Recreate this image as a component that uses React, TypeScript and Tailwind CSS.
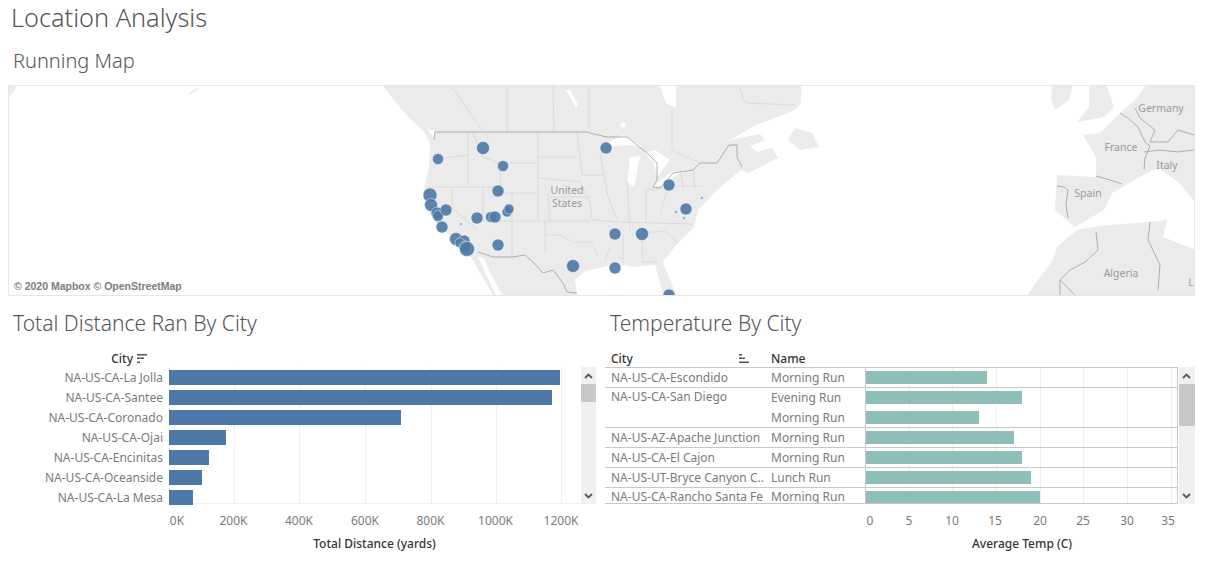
const UI_FONT = "font-['Noto_Sans',sans-serif]";

const distanceRows = [
  { city: "NA-US-CA-La Jolla", width: 391 },
  { city: "NA-US-CA-Santee", width: 383 },
  { city: "NA-US-CA-Coronado", width: 232 },
  { city: "NA-US-CA-Ojai", width: 57 },
  { city: "NA-US-CA-Encinitas", width: 40 },
  { city: "NA-US-CA-Oceanside", width: 33 },
  { city: "NA-US-CA-La Mesa", width: 24 },
];

const distanceTicks = [
  { label: "0K", left: 8 },
  { label: "200K", left: 64.5 },
  { label: "400K", left: 130 },
  { label: "600K", left: 196 },
  { label: "800K", left: 261.5 },
  { label: "1000K", left: 326.5 },
  { label: "1200K", left: 392 },
];

const tempGroups = [
  { city: "NA-US-CA-Escondido", runs: [{ name: "Morning Run", width: 121 }] },
  {
    city: "NA-US-CA-San Diego",
    runs: [
      { name: "Evening Run", width: 156 },
      { name: "Morning Run", width: 113 },
    ],
  },
  { city: "NA-US-AZ-Apache Junction", runs: [{ name: "Morning Run", width: 148 }] },
  { city: "NA-US-CA-El Cajon", runs: [{ name: "Morning Run", width: 156 }] },
  { city: "NA-US-UT-Bryce Canyon C..", runs: [{ name: "Lunch Run", width: 165 }] },
  { city: "NA-US-CA-Rancho Santa Fe", runs: [{ name: "Morning Run", width: 174 }] },
];

const tempTicks = [
  { label: "0", left: 5 },
  { label: "5", left: 44 },
  { label: "10", left: 87 },
  { label: "15", left: 130 },
  { label: "20", left: 175 },
  { label: "25", left: 218 },
  { label: "30", left: 262 },
  { label: "35", left: 303 },
];

const tempGrid = [44, 87, 131, 175, 218, 262, 306];

const dots = [
  [438, 159, 5.5], [483, 148, 6.5], [503, 166, 5.5], [606, 148, 6], [669, 185, 6],
  [686, 209, 6], [430, 195, 7], [431, 205, 6.5], [437, 213, 6], [438, 216, 5.5],
  [446, 210, 6], [442, 227, 6], [456, 239, 6.5], [464, 241, 6], [460, 243, 5],
  [465, 247, 6], [467, 249, 7.5], [477, 218, 6], [491, 217, 5.5], [495, 217, 6],
  [507, 212, 5], [509, 209, 5], [498, 191, 6], [498, 245, 6], [573, 266, 6.5],
  [615, 234, 6], [642, 234, 6.5], [615, 268, 6], [669, 295, 6],
  [461, 224, 1.2], [676, 212, 1.2], [684, 218, 1.2], [702, 198, 1.2],
];

const nationalBorders = [
  "M434,140 L435,132 L587,132 L590,133 L607,137 L627,137 L647,153 L657,163 L657,180 L653,187 L660,188 L673,173 L693,170 L700,163 L717,163 L729,145 L737,145 L737,157 L742,167",
  "M478,252 L493,257 L512,257 L525,255 L533,262 L543,273 L553,270 L563,283 L567,292 L577,293",
  "M1057,186 L1064,187 L1068,190 L1066,205 L1068,218",
  "M1096,176 L1110,180 L1122,184",
  "M1120,113 L1128,118 L1138,127 L1145,142 L1150,146 L1145,158 L1144,170",
  "M1144,152 L1160,150 L1178,152 L1194,150",
  "M1135,108 L1140,118 L1155,130 L1150,142 L1168,142 L1178,130 L1194,135",
  "M1150,222 L1148,240 L1160,265 L1158,290",
  "M1096,232 L1098,250 L1085,262 L1070,270 L1060,280 L1060,295",
  "M1060,280 L1075,295",
];

const stateLines = [
  "M443,158 L468,155", "M468,132 L468,185", "M473,132 L482,157 L500,163 L538,163",
  "M538,132 L538,221", "M538,157 L577,157", "M538,178 L580,182",
  "M500,163 L501,193 L538,193", "M428,187 L501,187", "M452,187 L452,208 L478,230",
  "M483,187 L483,221", "M480,221 L590,221", "M512,193 L512,257",
  "M548,193 L550,222", "M550,197 L590,197", "M545,222 L545,253",
  "M545,235 L560,235 L573,242 L592,242 L597,255", "M580,182 L590,203 L592,220 L620,222",
  "M577,133 L582,175 L603,175", "M600,153 L608,197 L617,220", "M620,222 L693,224",
  "M610,247 L605,262", "M623,235 L623,263", "M642,233 L643,263", "M643,262 L657,262",
  "M642,233 L665,231 L678,243", "M627,180 L630,230", "M646,188 L646,222",
  "M646,190 L668,188", "M668,188 L660,215", "M680,170 L684,190", "M693,170 L695,188",
  "M668,186 L702,186", "M452,87 L468,110 L482,130", "M507,86 L507,132", "M553,86 L554,132",
  "M589,86 L589,128", "M672,110 L672,150 L698,162", "M739,87 L745,103 L795,105",
];

function ScrollBar({ thumbTop, thumbHeight, width }: { thumbTop: number; thumbHeight: number; width: string }) {
  return (
    <div className={`relative h-[137px] bg-[#f0f0f0] ${width}`}>
      <div
        className="absolute left-0 right-0 bg-[#c8c8c8]"
        style={{ top: thumbTop, height: thumbHeight }}
      />
      <svg className="absolute left-[3px] top-[6px]" width="9" height="6" viewBox="0 0 9 6">
        <path d="M1,5 L4.5,1.5 L8,5" fill="none" stroke="#5a5a5a" strokeWidth="1.8" />
      </svg>
      <svg className="absolute bottom-[5px] left-[3px]" width="9" height="6" viewBox="0 0 9 6">
        <path d="M1,1 L4.5,4.5 L8,1" fill="none" stroke="#5a5a5a" strokeWidth="1.8" />
      </svg>
    </div>
  );
}

function RunningMap() {
  return (
    <div className="relative mx-[8px] h-[211px] w-[1187px] overflow-hidden border border-[#e6e6e6] bg-white">
      <svg className="block" width="1185" height="209" viewBox="9 86 1185 209">
        <g className="blur-[0.6px]">
          {/* land */}
          <g fill="#ebebeb">
            <path d="M381,84 L394,100 L408,117 L425,133 L430,143 L429,167 L423,193 L427,207 L436,223 L452,237 L471,257 L494,297 L577,297 L575,280 L585,271 L600,268 L615,264 L633,267 L655,265 L664,297 L676,297 L674,290 L663,262 L678,243 L694,227 L698,210 L717,190 L741,170 L749,173 L778,158 L772,148 L757,152 L750,146 L765,140 L760,134 L730,140 L756,125 L795,110 L801,103 L801,84 Z" />
            <path d="M788,140 L795,128 L812,133 L819,147 L800,150 Z" />
            <path d="M8,84 L16,84 L15,90 L10,96 L8,97 Z" />
            <path d="M192,91 L199,87 L197,91 L188,95 Z" />
            <path d="M1052,84 L1073,84 L1069,100 L1055,110 L1051,100 Z" />
            <path d="M1089,84 L1106,84 L1114,107 L1104,117 L1077,122 L1089,107 Z" />
            <path d="M1135,100 L1147,84 L1196,84 L1196,203 L1179,183 L1159,168 L1147,173 L1112,193 L1104,210 L1075,227 L1055,210 L1057,175 L1096,177 L1096,157 L1083,135 L1100,133 L1120,113 Z" />
            <path d="M1077,230 L1100,226 L1147,222 L1167,220 L1163,237 L1196,250 L1196,297 L1026,297 L1038,280 L1053,260 L1057,247 Z" />
          </g>
          {/* water inside the land */}
          <g fill="#ffffff">
            <path d="M478,257 L484,258 L490,272 L503,297 L497,297 L486,275 Z" />
            <path d="M659,84 L676,84 L676,108 L666,103 Z" />
            <path d="M566,90 L570,90 L578,105 L576,108 Z" />
            <circle cx="623" cy="125" r="2.5" />
            <path d="M607,143 L623,135 L643,147 L630,145 L612,146 Z" />
            <path d="M630,157 L640,156 L637,172 L634,187 L627,182 Z" />
            <path d="M645,153 L655,150 L670,160 L657,177 L654,162 Z" />
            <path d="M653,187 L667,175 L672,172 L690,169 L675,176 L662,186 Z" />
            <path d="M423,118 L428,129 L434,131 L434,137 L429,132 Z" />
            <path d="M1155,190 L1158,190 L1158,205 L1155,205 Z" />
            <path d="M1155,170 L1160,170 L1158,183 L1155,183 Z" />
            <path d="M1165,180 L1196,205 L1196,223 L1175,222 L1185,212 L1170,192 Z" />
          </g>
          <g fill="none" stroke="#d6d6d6" strokeWidth="0.8">
            {stateLines.map((d) => (
              <path key={d} d={d} />
            ))}
          </g>
          <g fill="none" stroke="#a6a6a6" strokeWidth="0.9">
            {nationalBorders.map((d) => (
              <path key={d} d={d} />
            ))}
          </g>
        </g>
        <g fontFamily="'Noto Sans', sans-serif" fontSize="10.5" fill="#9a9a9a" textAnchor="middle">
          <text x="567" y="194">United</text>
          <text x="567" y="207">States</text>
          <text x="1121" y="151">France</text>
          <text x="1088" y="197">Spain</text>
          <text x="1167" y="169">Italy</text>
          <text x="1161" y="112">Germany</text>
          <text x="1121" y="277">Algeria</text>
          <text x="1191" y="286">L</text>
        </g>
        <g fill="#4e79a7" fillOpacity="0.92" stroke="#ffffff" strokeOpacity="0.45" strokeWidth="1">
          {dots.map(([cx, cy, r]) => (
            <circle key={`${cx}-${cy}`} cx={cx} cy={cy} r={r} />
          ))}
        </g>
      </svg>
      <span className="absolute bottom-[3px] left-[5px] font-['Liberation_Sans',sans-serif] text-[10.5px] font-bold leading-[12px] text-[#7d7d7d]">
        © 2020 Mapbox © OpenStreetMap
      </span>
    </div>
  );
}

function DistanceChart() {
  return (
    <section className="w-[605px]">
      <h2 className="flex h-[54px] items-center pl-[13px] pt-[2px] text-[21px] font-light text-[#555]">
        Total Distance Ran By City
      </h2>
      <div className="flex h-[17px] w-[147px] items-center justify-end gap-[4px]">
        <span className="text-[12px] font-medium text-[#333]">City</span>
        <svg width="10" height="9" viewBox="0 0 10 9">
          <path d="M0,0 H10 V1.5 H0 Z M0,3.5 H7 V5 H0 Z M0,7.4 H3 V9 H0 Z" fill="#555" />
        </svg>
      </div>
      <div className="flex h-[137px] pl-0">
        <div className="w-[163px]">
          {distanceRows.map((row) => (
            <div key={row.city} className="flex h-[20px] items-center justify-end pt-[2px] text-[12px] text-[#7a7a7a]">
              {row.city}
            </div>
          ))}
        </div>
        <div className="relative ml-[6px] h-[137px] w-[412px] border-b border-[#f0f0f0]">
          {distanceTicks.map((tick, i) => (
            <div
              key={tick.label}
              className="absolute top-0 h-full w-px bg-[#f0f0f0]"
              style={{ left: i === 0 ? 0 : tick.left }}
            />
          ))}
          <div className="relative flex flex-col gap-[5px] pt-[3px]">
            {distanceRows.map((row) => (
              <div key={row.city} className="h-[15px] bg-[#4e79a7]" style={{ width: row.width }} />
            ))}
          </div>
        </div>
        <ScrollBar thumbTop={17} thumbHeight={18} width="w-[15px]" />
      </div>
      <div className="relative ml-[169px] h-[33px] w-[412px]">
        {distanceTicks.map((tick) => (
          <span
            key={tick.label}
            className="absolute top-[8px] -translate-x-1/2 text-[12px] leading-[18px] text-[#7a7a7a]"
            style={{ left: tick.left }}
          >
            {tick.label}
          </span>
        ))}
      </div>
      <div className="ml-[312px] w-[125px] whitespace-nowrap text-center text-[12px] font-medium leading-[14px] text-[#333]">
        Total Distance (yards)
      </div>
    </section>
  );
}

function TemperatureChart() {
  return (
    <section className="w-[590px]">
      <h2 className="flex h-[54px] items-center pl-[5px] pt-[2px] text-[21px] font-light text-[#555]">
        Temperature By City
      </h2>
      <div className="flex h-[17px] items-center text-[12px] font-medium text-[#333]">
        <span className="w-[134px] pl-[6px]">City</span>
        <svg width="10" height="9" viewBox="0 0 10 9">
          <path d="M0,0 H3 V1.5 H0 Z M0,3.5 H6 V5 H0 Z M0,7.4 H10 V9 H0 Z" fill="#555" />
        </svg>
        <span className="ml-[22px]">Name</span>
      </div>
      <div className="flex h-[137px]">
        <div className="relative h-[137px] w-[573px] overflow-hidden border-y border-[#c8c8c8]">
          <div className="absolute bottom-0 left-[260px] top-0 w-px bg-[#c8c8c8]" />
          <div className="absolute bottom-0 right-0 top-0 w-px bg-[#c8c8c8]" />
          {tempGrid.map((x) => (
            <div key={x} className="absolute bottom-0 top-0 w-px bg-[#f0f0f0]" style={{ left: 260 + x }} />
          ))}
          {tempGroups.map((group, i) => {
            const isLast = i === tempGroups.length - 1;
            return (
              <div key={group.city} className={i === 0 ? "relative flex" : "relative flex border-t border-[#c8c8c8]"}>
                <div
                  className={
                    isLast
                      ? "w-[166px] translate-y-[1px] whitespace-nowrap pl-[6px] text-[12px] leading-[15px] text-[#7a7a7a]"
                      : i === 1
                        ? "w-[166px] -translate-y-[1px] whitespace-nowrap pl-[6px] text-[12px] leading-[19px] text-[#7a7a7a]"
                        : "w-[166px] whitespace-nowrap pl-[6px] text-[12px] leading-[19px] text-[#7a7a7a]"
                  }
                >
                  {group.city}
                </div>
                <div className="flex-1">
                  {group.runs.map((run, j) => (
                    <div
                      key={run.name}
                      className={
                        isLast
                          ? "flex h-[15px] items-start"
                          : j === 1
                            ? "flex h-[20px] items-center"
                            : "flex h-[19px] items-center"
                      }
                    >
                      <span
                        className={
                          isLast
                            ? "w-[95px] translate-y-[1px] text-[12px] leading-[15px] text-[#7a7a7a]"
                            : j === 1
                              ? "w-[95px] translate-y-[1px] text-[12px] text-[#7a7a7a]"
                              : "w-[95px] text-[12px] text-[#7a7a7a]"
                        }
                      >
                        {run.name}
                      </span>
                      <div
                        className={isLast ? "mt-[3px] h-[12px] bg-[#8dbfb8]" : "h-[13px] bg-[#8dbfb8]"}
                        style={{ width: run.width }}
                      />
                    </div>
                  ))}
                </div>
              </div>
            );
          })}
        </div>
        <div className="ml-[1px]">
          <ScrollBar thumbTop={17} thumbHeight={42} width="w-[16px]" />
        </div>
      </div>
      <div className="relative ml-[260px] h-[33px] w-[313px]">
        {tempTicks.map((tick) => (
          <span
            key={tick.label}
            className="absolute top-[8px] -translate-x-1/2 text-[12px] leading-[18px] text-[#7a7a7a]"
            style={{ left: tick.left }}
          >
            {tick.label}
          </span>
        ))}
      </div>
      <div className="ml-[367px] w-[99px] whitespace-nowrap text-center text-[12px] font-medium leading-[14px] text-[#333]">
        Average Temp (C)
      </div>
    </section>
  );
}

export default function App() {
  return (
    <div className={`h-[563px] w-[1213px] overflow-hidden bg-white ${UI_FONT}`}>
      <h1 className="flex h-[35px] items-center pl-[11px] text-[25.3px] font-light text-[#555]">
        Location Analysis
      </h1>
      <h2 className="flex h-[50px] items-center pl-[13px] pt-[2px] text-[20px] font-light text-[#555]">
        Running Map
      </h2>
      <RunningMap />
      <div className="flex">
        <DistanceChart />
        <TemperatureChart />
      </div>
    </div>
  );
}
